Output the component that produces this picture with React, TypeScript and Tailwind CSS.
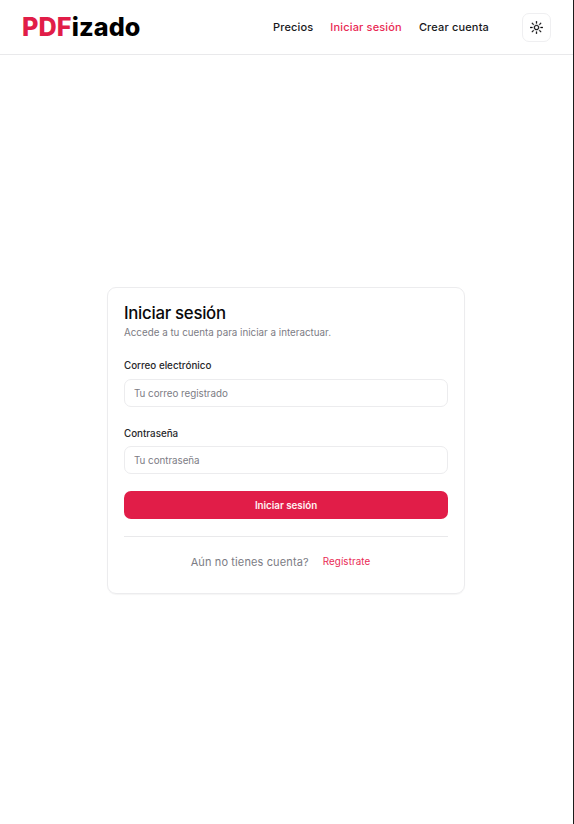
import { RxSun } from 'react-icons/rx';

type FieldProps = { id: string; label: string; placeholder: string; type: string };

function Field({ id, label, placeholder, type }: FieldProps) {
  return (
    <div className="flex flex-col">
      <label htmlFor={id} className="text-[9.8px] leading-[14px] font-medium text-[#27272a]">
        {label}
      </label>
      <input
        id={id}
        type={type}
        placeholder={placeholder}
        className="mt-auto h-7 w-full rounded-[7px] border border-[#ececee] bg-white px-[9px] text-[9.8px] tracking-[-0.03px] text-zinc-950 outline-none placeholder:text-[#7c7c84]"
      />
    </div>
  );
}

export default function App() {
  return (
    <div className="flex h-[824px] w-[574px] flex-col overflow-hidden border-r border-[#1c1c1c] bg-white font-['Inter',sans-serif] text-zinc-950">
      <header className="flex h-[55px] shrink-0 items-center border-b border-[#e9e9eb] px-[22px]">
        <a className="text-[25.2px] leading-[28px] font-extrabold tracking-[0.12px] text-black">
          <span className="text-[#e11d48]">PDF</span>izado
        </a>
        <nav className="ml-auto flex items-center gap-[17px] text-[11px] leading-4 font-medium tracking-[0.16px] text-[#18181b]">
          <a>Precios</a>
          <a className="text-[#e92a54]">Iniciar sesión</a>
          <a>Crear cuenta</a>
        </nav>
        <button aria-label="Tema" className="ml-[33px] flex size-[29px] items-center justify-center rounded-[7px] border border-[#efeff1]">
          <RxSun className="size-[13px]" strokeWidth={0.4} />
        </button>
      </header>
      <main className="flex flex-1 flex-col items-center pt-[232px] pr-px">
        <section className="flex h-[307px] w-[358px] flex-col rounded-[9px] border border-[#ececee] px-4 pt-4 shadow-[0_1px_1px_rgba(0,0,0,0.04)]">
          <h1 className="text-[16.8px] leading-[18px] font-medium tracking-[-0.28px]">Iniciar sesión</h1>
          <p className="mt-[4px] text-[9.8px] leading-[14px] text-[#7c7c84]">Accede a tu cuenta para iniciar a interactuar.</p>
          <form className="mt-[19px] grid grid-rows-[48px_47px_28px]">
            <Field id="email" label="Correo electrónico" placeholder="Tu correo registrado" type="email" />
            <div className="mt-5 grid h-[47px]">
              <Field id="password" label="Contraseña" placeholder="Tu contraseña" type="password" />
            </div>
            <button type="button" className="mt-[37px] h-7 rounded-[7px] bg-[#e11d48] pt-0.5 text-[9.8px] font-semibold tracking-[-0.03px] text-[#fff1f2]">
              Iniciar sesión
            </button>
          </form>
          <hr className="mt-[54px] border-[#e9e9eb]" />
          <div className="mt-[17px] flex items-center justify-center gap-[14px] pr-[11px] leading-4">
            <span className="text-[11px] tracking-[0.12px] text-[#7c7c84]">Aún no tienes cuenta?</span>
            <a className="text-[9.8px] tracking-[0.1px] text-[#e92a54]">Regístrate</a>
          </div>
        </section>
      </main>
    </div>
  );
}
